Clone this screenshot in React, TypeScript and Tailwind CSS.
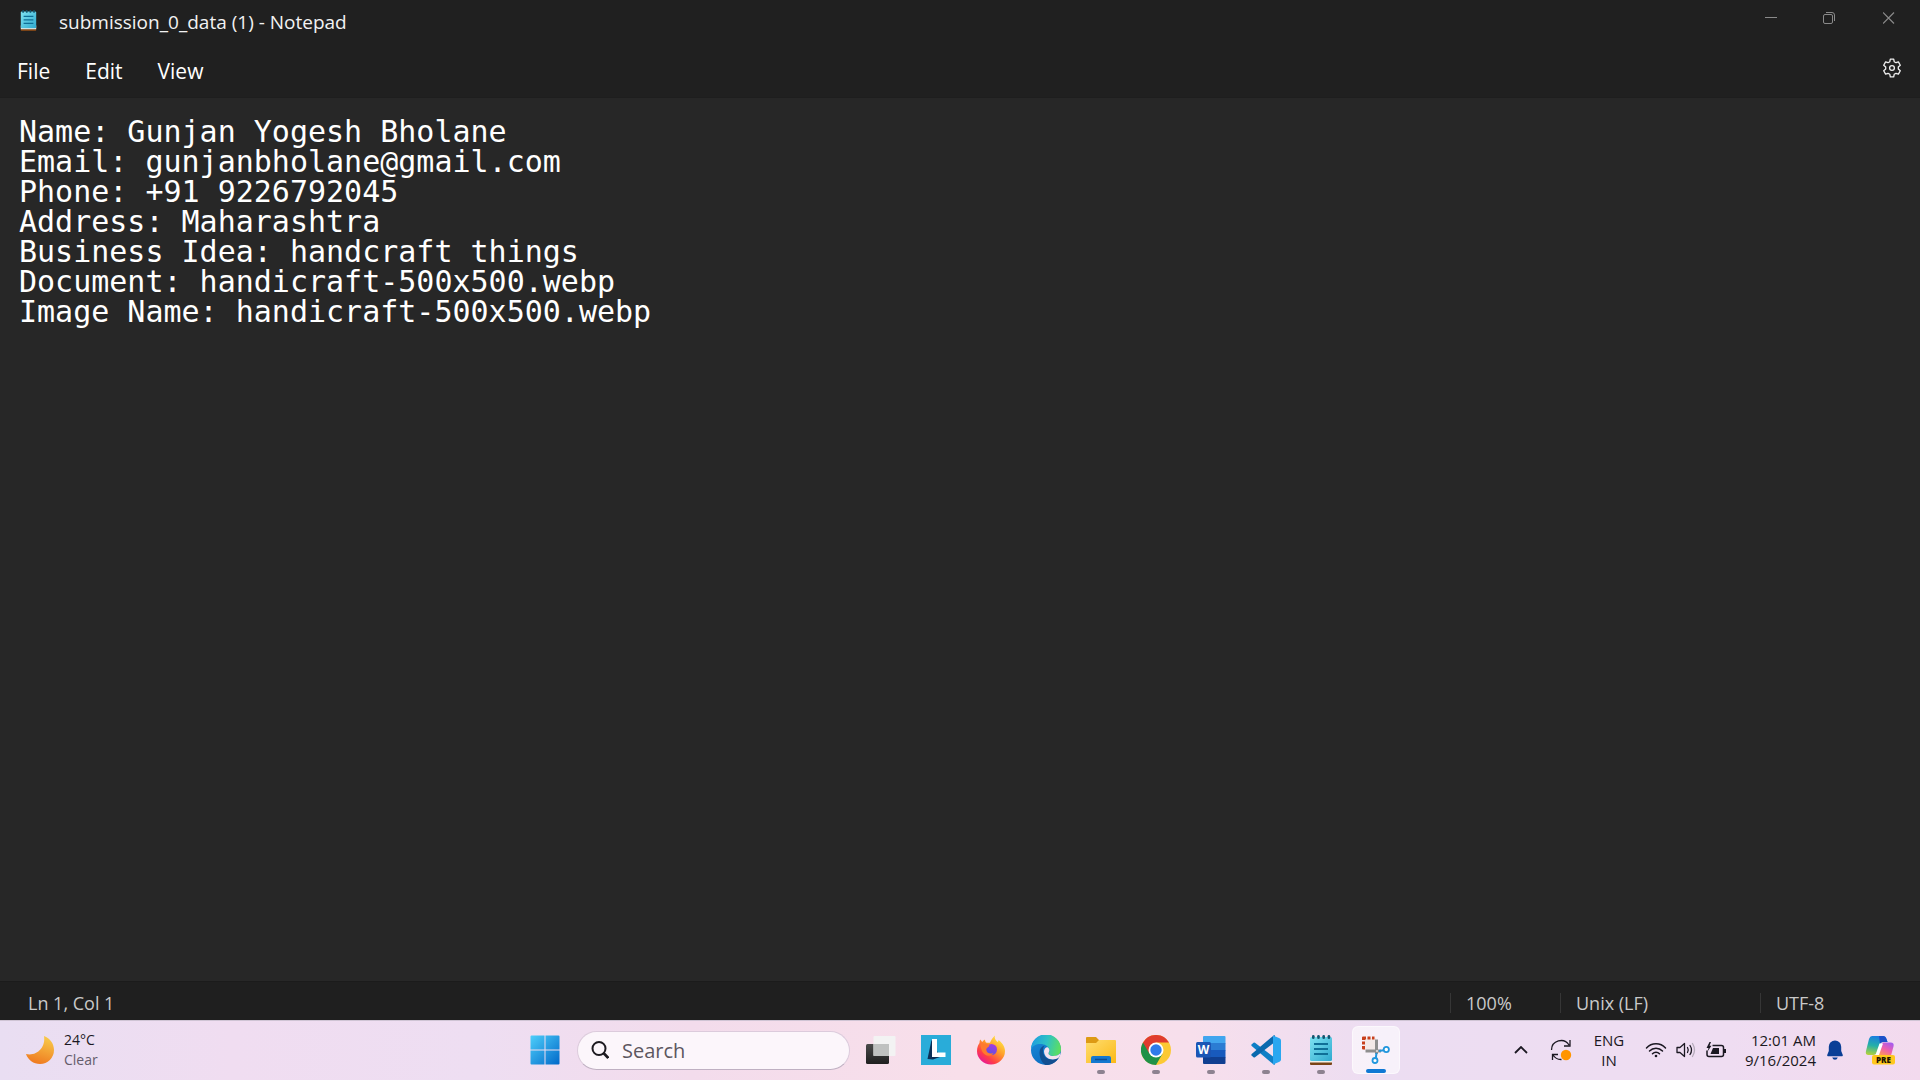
import type { ReactNode } from "react";
import { useState } from "react";

const initialText = `Name: Gunjan Yogesh Bholane
Email: gunjanbholane@gmail.com
Phone: +91 9226792045
Address: Maharashtra
Business Idea: handcraft things
Document: handicraft-500x500.webp
Image Name: handicraft-500x500.webp`;

const NotepadIcon = ({ className }: { className: string }) => (
  <svg viewBox="0 0 24 30" className={className}>
    <defs>
      <linearGradient id="pad" x1="0" y1="0" x2="1" y2="1">
        <stop offset="0" stopColor="#7fe3f2" />
        <stop offset="1" stopColor="#2fa9cf" />
      </linearGradient>
    </defs>
    <rect x="1" y="23" width="22" height="7" rx="1" fill="#7a4317" />
    <rect x="1" y="22" width="22" height="5.5" fill="#f4efe8" />
    <rect x="1" y="2" width="22" height="24" rx="1.5" fill="url(#pad)" />
    <g fill="#12566f">
      <rect x="3" y="0" width="2.6" height="4" rx="1.3" />
      <rect x="8.2" y="0" width="2.6" height="4" rx="1.3" />
      <rect x="13.4" y="0" width="2.6" height="4" rx="1.3" />
      <rect x="18.6" y="0" width="2.6" height="4" rx="1.3" />
    </g>
    <path d="M5 9h14M5 14h14M5 19h14" stroke="#0f6f97" strokeWidth="1.9" />
  </svg>
);

const MoonIcon = () => (
  <svg viewBox="0 0 28 28" className="h-7 w-7">
    <defs>
      <linearGradient id="moon" x1="0.7" y1="0" x2="0.4" y2="1">
        <stop offset="0" stopColor="#f8cb4a" />
        <stop offset="1" stopColor="#ef7a20" />
      </linearGradient>
    </defs>
    <path d="M18 0C24 2.500 28 7.500 28 14A14 14 0 0 1 14 28C7.500 28 2 24 0 18C10 20.500 20 12 18 0Z" fill="url(#moon)" />
  </svg>
);

const WindowsIcon = () => (
  <svg viewBox="0 0 30 30" className="h-[30px] w-[30px]">
    <defs>
      <linearGradient id="win" gradientUnits="userSpaceOnUse" x1="0" y1="0" x2="30" y2="30">
        <stop offset="0" stopColor="#4fd0fb" />
        <stop offset="1" stopColor="#0067c8" />
      </linearGradient>
    </defs>
    <path
      d="M1.500 0.500H14.500V14.500H0.500V1.500a1 1 0 0 1 1-1ZM15.500 0.500H28.500a1 1 0 0 1 1 1V14.500H15.500ZM0.500 15.500H14.500V29.500H1.500a1 1 0 0 1-1-1ZM15.500 15.500H29.500V28.500a1 1 0 0 1-1 1H15.500Z"
      fill="url(#win)"
    />
  </svg>
);

const TaskViewIcon = () => (
  <svg viewBox="0 0 30 30" className="h-[30px] w-[30px]">
    <defs>
      <linearGradient id="tv" x1="0" y1="0" x2="0" y2="1">
        <stop offset="0" stopColor="#4a4a4a" />
        <stop offset="1" stopColor="#1f1f1f" />
      </linearGradient>
    </defs>
    <rect x="0" y="9" width="23" height="20" rx="1.500" fill="url(#tv)" />
    <rect x="7.500" y="1" width="22" height="20" rx="1" fill="#f3f3f3" />
    <rect x="7.500" y="9" width="15.500" height="12" fill="#bfc1c0" />
  </svg>
);

const LIcon = () => (
  <svg viewBox="0 0 30 30" className="h-[30px] w-[30px]">
    <rect width="30" height="30" fill="#29acd9" />
    <path d="M10.500 5L6.500 24L12 24.500L19 22Z" fill="#0b2f57" />
    <path d="M11 4H16V17.500H24.500V22H11Z" fill="#fff" />
  </svg>
);

const FirefoxIcon = () => (
  <svg viewBox="0 0 30 30" className="h-[30px] w-[30px]">
    <defs>
      <linearGradient id="fox" x1="0.85" y1="0.1" x2="0.2" y2="0.95">
        <stop offset="0" stopColor="#ffe743" />
        <stop offset="0.4" stopColor="#ff9a2a" />
        <stop offset="0.75" stopColor="#ff3d47" />
        <stop offset="1" stopColor="#e5179b" />
      </linearGradient>
      <linearGradient id="globe" x1="0.7" y1="0" x2="0.3" y2="1">
        <stop offset="0" stopColor="#a93be0" />
        <stop offset="1" stopColor="#5b52e0" />
      </linearGradient>
    </defs>
    <path
      d="M19 0.500C18 3 19.500 5 21.500 7C22.500 6.500 22.500 5.500 22.500 5C26 7.500 29 11.500 29 16A14 13.500 0 0 1 1 16C1 12 2.500 9.500 3.500 8C3.500 7 3.700 5.500 4.300 4.500C5 5.500 5.500 6.200 6.200 7C7 6 8 5 9 4.500C9 6 9.500 7 10.500 7.800H14C15 5 17 2 19 0.500Z"
      fill="url(#fox)"
    />
    <circle cx="15.500" cy="14.500" r="5.500" fill="url(#globe)" />
    <path d="M4.500 9C8 8 11.500 8.500 13.500 10.500C12.500 12.500 10.500 12.500 10.200 14.500C10.200 18 14 19.500 17.500 18C15.500 22 9 21.500 6.500 17C5.300 14.500 4.500 12 4.500 9Z" fill="#ff7a2e" />
  </svg>
);

const EdgeIcon = () => (
  <svg viewBox="0 0 30 30" className="h-[30px] w-[30px]">
    <defs>
      <linearGradient id="edgeTop" x1="0" y1="0.4" x2="1" y2="0.6">
        <stop offset="0" stopColor="#1e9de0" />
        <stop offset="0.5" stopColor="#2fc2c4" />
        <stop offset="1" stopColor="#5fe05c" />
      </linearGradient>
      <linearGradient id="edgeLeft" x1="0" y1="0" x2="0.5" y2="1">
        <stop offset="0" stopColor="#1a8fdc" />
        <stop offset="1" stopColor="#0d6cc0" />
      </linearGradient>
    </defs>
    <circle cx="15" cy="15" r="15" fill="url(#edgeLeft)" />
    <path d="M0 14.500A15 15 0 0 1 30 14C30 18.500 27 21 22.500 21C19.500 21 17.500 20 17.500 18.500C17.500 17.500 19 17 18.500 15C17.500 11 13.500 9 9.500 9C5 9 1 11 0 14.500Z" fill="url(#edgeTop)" />
    <path d="M8.500 17.500C8.500 14 10.500 11.500 13.500 10.500C10.500 14 11.500 24 20.500 24.500C23.500 24.600 26 23.500 28 22C25.500 27.500 20 30.500 14.500 30C10.500 27.500 8.500 22.500 8.500 17.500Z" fill="#124f91" />
    <path d="M13 16.500C13 14 14.700 12 16.700 12.200C18.300 13.500 19 15.500 18 17C16.500 19 18.500 21 22.500 21C25.500 21 28 20 29.300 18C29.500 20 28.500 22 27.500 22.800C23 26 13.500 25 13 16.500Z" fill="#f6e1ef" />
  </svg>
);

const FolderIcon = () => (
  <svg viewBox="0 0 30 28" className="h-7 w-[30px]">
    <defs>
      <linearGradient id="folder" x1="0" y1="0" x2="1" y2="1">
        <stop offset="0" stopColor="#ffdd70" />
        <stop offset="1" stopColor="#fbb916" />
      </linearGradient>
    </defs>
    <path d="M0 2Q0 1 1 1H10L13 4H29V9H0Z" fill="#dd9a14" />
    <path d="M0 7H10L13 4H29Q30 4 30 5V27H0Z" fill="url(#folder)" />
    <path d="M5 27V22Q5 20 7 20H23Q25 20 25 22V27Z" fill="#1478cf" />
    <path d="M9 23.500H21" stroke="#0b4d94" strokeWidth="1.500" />
  </svg>
);

const ChromeIcon = () => (
  <svg viewBox="0 0 30 30" className="h-[30px] w-[30px]">
    <circle cx="15" cy="15" r="15" fill="#fcc934" />
    <path d="M15 15L2 7.500A15 15 0 0 0 15 30L21.500 18.700Z" fill="#1f9148" />
    <path d="M2 7.500A15 15 0 0 1 28 7.500H15L8.500 18.700Z" fill="#e03c2e" />
    <circle cx="15" cy="15" r="7.500" fill="#fff" />
    <circle cx="15" cy="15" r="5.700" fill="#2f7bea" />
  </svg>
);

const WordIcon = () => (
  <svg viewBox="0 0 30 28" className="h-7 w-[30px]">
    <rect x="7" y="0" width="22.500" height="8" rx="1" fill="#41a5ee" />
    <rect x="7" y="7" width="22.500" height="7.500" fill="#2b7cd3" />
    <rect x="7" y="14" width="22.500" height="7.500" fill="#185abd" />
    <path d="M7 21H29.500V27Q29.500 28 28.500 28H8Q7 28 7 27Z" fill="#103f91" />
    <rect x="0" y="6" width="15" height="15.500" rx="1.500" fill="#1b56b5" />
    <text x="7.500" y="18" textAnchor="middle" fill="#fff" fontSize="12" fontWeight="700" fontFamily="Open Sans, sans-serif">
      W
    </text>
  </svg>
);

const VSCodeIcon = () => (
  <svg viewBox="0 0 30 30" className="h-[30px] w-[30px]">
    <path d="M0.500 9.500L2.500 7.700Q3.300 7.200 4 7.700L24 23V29.500Q23 30 22 29L0.700 11Q0 10.200 0.500 9.500Z" fill="#0f7fc6" />
    <path d="M0.500 20.500L2.500 22.300Q3.300 22.800 4 22.300L24 7V0.500Q23 0 22 1L0.700 19Q0 19.800 0.500 20.500Z" fill="#0a69ae" />
    <path d="M22 0.500L28.500 3.300Q30 4 30 5.500V24.500Q30 26 28.500 26.700L22 29.500Z" fill="#2aa7f0" />
  </svg>
);

const SnipIcon = () => (
  <svg viewBox="0 0 28 28" className="h-7 w-7">
    <rect x="2" y="2" width="12" height="12" fill="#f3e9e8" />
    <g fill="#c8401c">
      <path d="M0 4V1.500Q0 0.500 1 0.500H4V3.500H3V4Z" />
      <path d="M5.500 0.500H8.500V3.500H5.500ZM10 0.500H12.500V3.500H10Z" />
      <path d="M0 5.500H3V8.500H0ZM0 10H3V13.500H1Q0 13.500 0 12.500Z" />
    </g>
    <path d="M14.500 3.500V18M3.500 15H19" stroke="#8f8f8f" strokeWidth="3" />
    <path d="M14.500 17L13.800 22M17 15L21.500 14.200" stroke="#2196dd" strokeWidth="2" />
    <circle cx="15" cy="15" r="1" fill="#e6e6e6" />
    <g fill="#fff" stroke="#2196dd" strokeWidth="1.800">
      <circle cx="13" cy="24.500" r="2.500" />
      <circle cx="24.300" cy="13.500" r="2.600" />
    </g>
  </svg>
);

const CopilotIcon = () => (
  <svg viewBox="0 0 30 30" className="h-[30px] w-[30px]">
    <defs>
      <linearGradient id="copL" x1="0.4" y1="0" x2="0.2" y2="1">
        <stop offset="0" stopColor="#1b7ee0" />
        <stop offset="0.5" stopColor="#24b0a8" />
        <stop offset="1" stopColor="#b5d33a" />
      </linearGradient>
      <linearGradient id="copR" x1="0.8" y1="0" x2="0.2" y2="1">
        <stop offset="0" stopColor="#a35bf0" />
        <stop offset="0.5" stopColor="#ee5fae" />
        <stop offset="1" stopColor="#ff9a55" />
      </linearGradient>
    </defs>
    <path d="M7 1H18Q20.500 1 21.500 4L22.500 7H18Q15.500 7 14.500 10L12 17Q11 20 8 20H3.500Q0 20 1 16L4 4Q5 1 7 1Z" fill="url(#copL)" />
    <path d="M14 1H18Q20.500 1 21.500 4L22.500 7H18Q16 7 15 9Z" fill="#1d50c8" />
    <path d="M18 7.500H25.500Q29.500 7.500 28.500 11.500L26 20.500H12.500L16 10Q16.800 7.500 18 7.500Z" fill="url(#copR)" />
    <path d="M14.500 8.500H18L14 20H10.500Z" fill="#fff" />
    <rect x="7" y="20" width="23" height="9.500" rx="2" fill="#ffc81e" />
    <text x="18.500" y="27.500" textAnchor="middle" fill="#1d1500" fontSize="8" fontWeight="800" fontFamily="Open Sans, sans-serif">
      PRE
    </text>
  </svg>
);

type TaskbarApp = { name: string; icon: ReactNode; running?: boolean; active?: boolean };

const apps: TaskbarApp[] = [
  { name: "Task view", icon: <TaskViewIcon /> },
  { name: "Lenovo Vantage", icon: <LIcon /> },
  { name: "Firefox", icon: <FirefoxIcon /> },
  { name: "Edge", icon: <EdgeIcon /> },
  { name: "File Explorer", icon: <FolderIcon />, running: true },
  { name: "Chrome", icon: <ChromeIcon />, running: true },
  { name: "Word", icon: <WordIcon />, running: true },
  { name: "Visual Studio Code", icon: <VSCodeIcon />, running: true },
  { name: "Notepad", icon: <NotepadIcon className="h-[30px] w-6" />, running: true },
  { name: "Snipping Tool", icon: <SnipIcon />, active: true },
];

const TitleBar = () => (
  <header className="flex h-11 items-start justify-between">
    <div className="flex h-11 items-center gap-[22px] pl-5">
      <NotepadIcon className="mb-1 h-[21px] w-[17px]" />
      <h1 className="text-[19px] leading-6 text-[#f2f2f2]">submission_0_data (1) - Notepad</h1>
    </div>
    <div className="flex text-[#8a8a8a]">
      <button aria-label="Minimize" className="flex h-9 w-[58px] items-center justify-center">
        <svg viewBox="0 0 12 12" className="h-3 w-3" stroke="currentColor">
          <path d="M0 5.500H12" />
        </svg>
      </button>
      <button aria-label="Restore" className="flex h-9 w-[58px] items-center justify-center">
        <svg viewBox="0 0 12 12" className="h-3 w-3" fill="none" stroke="currentColor">
          <rect x="0.500" y="2.500" width="9" height="9" rx="1.500" />
          <path d="M3 0.500H9Q11.500 0.500 11.500 3V9" />
        </svg>
      </button>
      <button aria-label="Close" className="flex h-9 w-[62px] items-center justify-center">
        <svg viewBox="0 0 12 12" className="h-3 w-3" stroke="currentColor" strokeWidth="1.200">
          <path d="M0 0.500L11 11.500M11 0.500L0 11.500" />
        </svg>
      </button>
    </div>
  </header>
);

const MenuBar = () => (
  <nav className="flex h-[54px] items-start justify-between border-b border-[#1e1e1e] pl-[17px] pr-[18px]">
    <div className="flex gap-[35px] pt-[13px] text-[21px] leading-7 text-white">
      <button>File</button>
      <button>Edit</button>
      <button>View</button>
    </div>
    <button aria-label="Settings" className="pt-[14px] text-[#f0f0f0]">
      <svg viewBox="0 0 20 20" className="h-5 w-5" fill="none" stroke="currentColor" strokeWidth="1.300" strokeLinejoin="round">
        <path d="M8.300 1.200H11.700L12.200 3.700L14 4.700L16.400 3.900L18.300 7.200L16.300 9V11L18.300 12.800L16.400 16.100L14 15.300L12.200 16.300L11.700 18.800H8.300L7.800 16.300L6 15.300L3.600 16.100L1.700 12.800L3.700 11V9L1.700 7.200L3.600 3.900L6 4.700L7.800 3.700Z" />
        <circle cx="10" cy="10" r="2.400" />
      </svg>
    </button>
  </nav>
);

const StatusBar = () => (
  <footer className="flex h-[39px] shrink-0 items-center justify-between border-t border-[#1b1b1b] bg-[#1f1f1f] pt-1 text-[18px] leading-5 text-[#c9c9c9]">
    <span className="pl-7">Ln 1, Col 1</span>
    <div className="flex">
      <span className="h-5 w-[110px] border-l border-[#363636] pl-[15px]">100%</span>
      <span className="h-5 w-[200px] border-l border-[#363636] pl-[15px]">Unix (LF)</span>
      <span className="h-5 w-[160px] border-l border-[#363636] pl-[15px]">UTF-8</span>
    </div>
  </footer>
);

const AppButton = ({ name, icon, running, active }: TaskbarApp) => (
  <button aria-label={name} className="flex h-full w-[55px] items-center justify-center">
    <span
      className={
        active
          ? "relative flex h-12 w-12 items-center justify-center rounded-md border border-white/50 bg-white/60"
          : "relative flex h-12 w-12 items-center justify-center"
      }
    >
      {icon}
      {running && <span className="absolute bottom-0 h-1 w-2 rounded-full bg-[#8d8290]" />}
      {active && <span className="absolute bottom-0 h-1 w-5 rounded-full bg-[#0f78d4]" />}
    </span>
  </button>
);

const SystemTray = () => (
  <div className="flex h-full items-center justify-self-end pr-[14px] pb-[2px] text-[#1b1822]">
    <button aria-label="Show hidden icons" className="flex w-8 justify-center">
      <svg viewBox="0 0 14 8" className="h-2 w-[14px]" fill="none" stroke="currentColor" strokeWidth="1.800">
        <path d="M1 7L7 1L13 7" />
      </svg>
    </button>
    <button aria-label="Updates" className="flex w-12 justify-center">
      <svg viewBox="0 0 22 22" className="h-[22px] w-[22px]" fill="none" stroke="currentColor" strokeWidth="1.300">
        <path d="M1.500 11A9.500 9.500 0 0 1 19 6M20 1V7H14M11.500 20.500A9.500 9.500 0 0 1 3 16M2.500 21V15.500H8" />
        <circle cx="16" cy="16" r="5.200" fill="#ff9500" stroke="none" />
      </svg>
    </button>
    <button className="w-12 text-center text-[15px] leading-5">
      ENG
      <br />
      IN
    </button>
    <button aria-label="Network, volume, battery" className="flex pl-2">
      <span className="flex w-[30px] justify-center">
        <svg viewBox="0 0 22 16" className="h-4 w-[22px]" fill="none" stroke="currentColor" strokeWidth="1.500" strokeLinecap="round">
          <path d="M1.500 6A13 13 0 0 1 20.500 6M4.500 9A9 9 0 0 1 17.500 9M7.500 11.800A5 5 0 0 1 14.500 11.800" />
          <circle cx="11" cy="14" r="1.300" fill="currentColor" stroke="none" />
        </svg>
      </span>
      <span className="flex w-[30px] justify-center">
        <svg viewBox="0 0 20 16" className="h-4 w-5" fill="none" stroke="currentColor" strokeWidth="1.300" strokeLinejoin="round" strokeLinecap="round">
          <path d="M1 5.500H4L8.500 1.500V14.500L4 10.500H1ZM11.500 5.500Q13 8 11.500 10.500M14 3.500Q17 8 14 12.500" />
          <path d="M16.500 1.500Q20.500 8 16.500 14.500" stroke="#b5abba" />
        </svg>
      </span>
      <span className="flex w-[30px] justify-center">
        <svg viewBox="0 0 20 16" className="h-4 w-5" fill="none" stroke="currentColor" strokeWidth="1.500">
          <path d="M6.500 3.500H15.500Q17.500 3.500 17.500 5.500V12.500Q17.500 14.500 15.500 14.500H3Q1 14.500 1 12.500V8.500" />
          <path d="M4.500 12L7 6H13V12Z" fill="currentColor" stroke="none" />
          <path d="M18 7V11H20V7Z" fill="currentColor" stroke="none" />
          <path d="M3.500 0L0.500 6H2.500L1.500 9.500L5.500 3.800H3.500L5 0Z" fill="currentColor" stroke="none" />
        </svg>
      </span>
    </button>
    <button className="w-[85px] text-right text-[15px] leading-5 whitespace-nowrap">
      12:01 AM
      <br />
      9/16/2024
    </button>
    <button aria-label="Notifications" className="flex w-[38px] justify-center">
      <svg viewBox="0 0 16 20" className="h-5 w-4" fill="#0a3f96">
        <path d="M8 0.500A6.200 6.200 0 0 0 1.800 6.700V11L0.200 15Q0 16.300 1 16.300H15Q16 16.300 15.800 15L14.200 11V6.700A6.200 6.200 0 0 0 8 0.500ZM5.200 17.500H10.800Q10 19.700 8 19.700T5.200 17.500Z" />
      </svg>
    </button>
    <button aria-label="Copilot" className="flex w-[52px] justify-center">
      <CopilotIcon />
    </button>
  </div>
);

const Taskbar = () => (
  <div className="grid h-[60px] shrink-0 grid-cols-[1fr_auto_1fr] grid-rows-1 border-t border-[#cfc4d4] bg-[linear-gradient(90deg,#e9def2_0%,#f0ddf1_12%,#eedef2_25%,#f3dcec_36%,#f8dfea_50%,#f7dfec_62%,#ecddf2_72%,#efddf2_90%,#f3daee_100%)]">
    <button className="flex h-full items-center gap-[10px] pb-[2px] pl-[26px] text-left">
      <MoonIcon />
      <span className="text-[14px] leading-5">
        <span className="block text-[#1b1822]">24°C</span>
        <span className="block text-[#655c6b]">Clear</span>
      </span>
    </button>
    <div className="flex h-full items-center pb-px">
      <button aria-label="Start" className="flex w-[55px] justify-center">
        <WindowsIcon />
      </button>
      <label className="mr-[3px] ml-[5px] flex h-[39px] w-[273px] items-center gap-[13px] rounded-full border border-[#dccbdc] border-b-[#bfb0c2] bg-[#fcf6fb] pl-[13px]">
        <svg viewBox="0 0 18 18" className="h-[18px] w-[18px] shrink-0" fill="none" stroke="#1d1a20" strokeWidth="2">
          <circle cx="8" cy="7.500" r="6.500" />
          <path d="M12.500 12L17.300 17" strokeWidth="2.600" />
        </svg>
        <input
          type="text"
          aria-label="Search"
          placeholder="Search"
          className="w-full min-w-0 bg-transparent pt-px pr-4 text-[20px] leading-6 outline-none placeholder:text-[#5d575f]"
        />
      </label>
      {apps.map((app) => (
        <AppButton key={app.name} {...app} />
      ))}
    </div>
    <SystemTray />
  </div>
);

const App = () => {
  const [text, setText] = useState(initialText);

  return (
    <div className="flex h-screen flex-col overflow-hidden bg-[#202020] font-['Open_Sans',sans-serif]">
      <TitleBar />
      <MenuBar />
      <textarea
        aria-label="Text editor"
        spellCheck={false}
        value={text}
        onChange={(e) => setText(e.target.value)}
        className="block w-full flex-1 resize-none bg-[#272727] px-[19px] pt-[19px] font-['DejaVu_Sans_Mono',monospace] text-[30px] leading-[30px] text-white outline-none"
      />
      <StatusBar />
      <Taskbar />
    </div>
  );
};

export default App;
